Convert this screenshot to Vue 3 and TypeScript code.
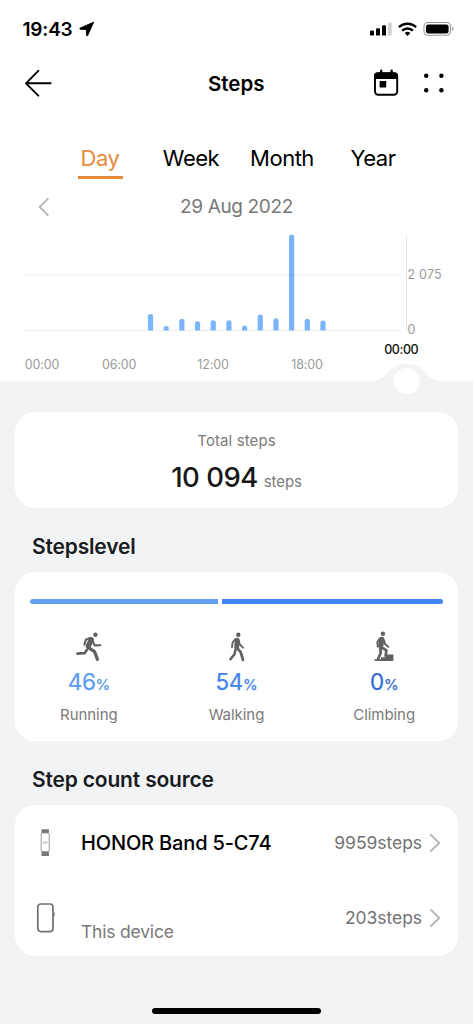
<template>
  <div class="screen">
    <section class="top">
      <div class="status-bar">
        <span class="clock">19:43</span>
        <svg class="location" width="16" height="16" viewBox="0 0 16 16">
          <path d="M14.6 1.2 1.2 7.1c-.7.4-.5 1.1.3 1.2l5.8.2.2 5.7c.1.8.8 1 1.2.3z" stroke="#000" stroke-width=".9" stroke-linejoin="round" />
        </svg>
        <svg class="indicators" width="86" height="16" viewBox="0 0 86 16">
          <rect x="0" y="9.6" width="4" height="5" rx="1.2" />
          <rect x="6" y="7.3" width="4" height="7.3" rx="1.2" />
          <rect x="12" y="4.3" width="4" height="10.3" rx="1.2" />
          <rect x="18" y="1.5" width="3.6" height="13.1" rx="1.2" fill="#cfcfcf" />
          <g fill="none" stroke="#000" stroke-width="2.5">
            <path d="M28.9 6.2a12.4 12.4 0 0 1 17.2 0" />
            <path d="M32.1 9.7a7.8 7.8 0 0 1 10.8 0" />
          </g>
          <path d="M34.6 12.1a4.2 4.2 0 0 1 5.8 0l-2.9 2.9z" />
          <rect x="54" y="1.5" width="26.6" height="12.8" rx="4" fill="none" stroke="#999" stroke-width="1.1" />
          <rect x="56" y="3.4" width="22.6" height="9" rx="2.2" />
          <path d="M82.3 5.8c1.7.6 1.7 3.8 0 4.4z" fill="#999" />
        </svg>
      </div>

      <header class="nav">
        <svg class="back" width="28" height="28" viewBox="0 0 28 28">
          <path d="M26.6 14.3H2.1M14.3 1.8 2 14.3l12.3 12.4" />
        </svg>
        <h1>Steps</h1>
        <svg class="calendar" width="26" height="28" viewBox="0 0 26 28">
          <rect x="2" y="4.2" width="22.2" height="21.6" rx="3.2" fill="none" stroke="#000" stroke-width="1.9" />
          <path d="M1 10V6.5a3 3 0 0 1 3-3h18a3 3 0 0 1 3 3V10z" />
          <path d="M8.2 1.8v3M18.6 1.8v3" stroke="#000" stroke-width="2.4" stroke-linecap="round" />
          <rect x="6.6" y="12" width="6.6" height="6.6" rx=".6" />
        </svg>
        <svg class="more" width="26" height="22" viewBox="0 0 26 22">
          <circle cx="5.2" cy="3.8" r="2.2" />
          <circle cx="20.4" cy="3.8" r="2.2" />
          <circle cx="5.2" cy="18.3" r="2.2" />
          <circle cx="20.4" cy="18.3" r="2.2" />
        </svg>
      </header>

      <nav class="tabs">
        <button
          v-for="tab in tabs"
          :key="tab"
          class="tab"
          :class="{ active: tab === activeTab }"
          @click="activeTab = tab"
        >
          {{ tab }}
        </button>
      </nav>

      <div class="date-row">
        <svg class="prev" width="12" height="20" viewBox="0 0 12 20">
          <path d="M10.3 1.4 1.6 10l8.7 8.6" />
        </svg>
        <span>29 Aug 2022</span>
      </div>

      <svg class="chart" width="473" height="173" viewBox="0 225 473 173">
        <path d="M24 274.8H401M24 330.5H401" stroke="#ececec" />
        <path d="M406.5 236V331" stroke="#e6e6e6" />
        <path v-for="bar in bars" :key="bar.x" :d="barPath(bar)" fill="#7ab5fb" />
        <path d="M289.2 274.8h5" stroke="#6fa9ee" />
        <g class="axis">
          <text x="407.5" y="278.6" textLength="34">2 075</text>
          <text x="407.5" y="333.6">0</text>
          <text v-for="label in timeLabels" :key="label.text" :x="label.x" y="369.3" text-anchor="middle">
            {{ label.text }}
          </text>
        </g>
        <text class="cursor-time" x="401.2" y="354" text-anchor="middle">00:00</text>
        <path d="M0 381.5H370C388 381.5 386 364 406.5 364S425 381.5 443 381.5H473V398H0z" fill="#f1f3f5" />
        <circle cx="406.5" cy="381" r="13" fill="#fff" />
      </svg>
    </section>

    <section class="card total">
      <p class="caption">Total steps</p>
      <p class="total-row"><strong>10 094</strong><span>steps</span></p>
    </section>

    <h2>Stepslevel</h2>
    <section class="card levels">
      <div class="split">
        <span
          v-for="level in levels.slice(0, 2)"
          :key="level.name"
          :style="{ flexGrow: level.percent, background: level.bar }"
        ></span>
      </div>
      <div class="level-list">
        <div v-for="level in levels" :key="level.name" class="level">
          <svg width="30" height="32" viewBox="0 0 30 32" class="figure">
            <g v-if="level.name === 'Running'">
              <circle cx="21.4" cy="4.7" r="2.2" class="solid" />
              <path d="M17.2 9.8 14.4 16" stroke-width="5.4" />
              <path d="M16 8 11.8 9.8 10.4 14.8M18.4 10.5 20.7 15.4 26.3 15.2" stroke-width="2.1" />
              <path d="M14.4 17.6 20.6 21.6 23.4 29.4" stroke-width="3.2" />
              <path d="M13 19.8 10.6 23.2 3.4 23.6" stroke-width="2.7" />
            </g>
            <g v-else-if="level.name === 'Walking'" transform="translate(.8 0)">
              <circle cx="16.5" cy="4.8" r="2.2" class="solid" />
              <path d="M15.4 10.2 14.9 17" stroke-width="4.9" />
              <path d="M13.6 9.2 10.8 12.3 10.2 17.2M17 10.4 18 14.4 21.2 17.6" stroke-width="1.9" />
              <path d="M15.2 17.8 18.9 22.2 21.2 30" stroke-width="2.7" />
              <path d="M13.7 19.4 12.6 24.4 8.6 29.2" stroke-width="2.5" />
            </g>
            <g v-else>
              <circle cx="13.9" cy="3.7" r="2.2" class="solid" />
              <path d="M12.8 9.4 11.8 15.6" stroke-width="5.2" />
              <path d="M11 8.4 8.4 12 8.8 16.6M15 10.2 16 14 19.3 16.8" stroke-width="2" />
              <path d="M12 17.2 17.4 20.5 16.6 26M11.2 18.3 11.8 22.8 9 29.3" stroke-width="2.7" />
              <path d="M5.5 29.2H12V27.2H17.3V24.4H24.4V31H5.5z" class="solid" />
            </g>
          </svg>
          <div class="percent" :style="{ color: level.color }">{{ level.percent }}<small>%</small></div>
          <div class="level-name">{{ level.name }}</div>
        </div>
      </div>
    </section>

    <h2 class="source-title">Step count source</h2>
    <section class="card sources">
      <div class="source">
        <svg class="device" width="20" height="32" viewBox="0 0 20 32">
          <path d="M6.5 2.3h7.4v5H6.5zM6.5 24h7.4v5H6.5z" fill="#777" />
          <rect x="6.2" y="6" width="8" height="18.6" rx=".8" fill="#fff" stroke="#999" />
          <path d="M8.6 14v3M8.6 15.5h2M10.4 14v3M12 14v3" stroke="#aaa" stroke-width=".6" />
        </svg>
        <span class="source-name">HONOR Band 5-C74</span>
        <span class="source-steps">9959steps</span>
        <svg class="next" width="12" height="20" viewBox="0 0 12 20">
          <path d="M1.4 1.4 10.2 10 1.4 18.6" />
        </svg>
      </div>
      <div class="source">
        <svg class="device" width="20" height="32" viewBox="0 0 20 32">
          <rect x="2.8" y="2" width="15.2" height="27.6" rx="3" fill="none" stroke="#6f6f6f" stroke-width="1.7" />
          <path d="M19 10.6v3.4" stroke="#6f6f6f" stroke-width="1.2" />
        </svg>
        <span class="source-name muted">This device</span>
        <span class="source-steps">203steps</span>
        <svg class="next" width="12" height="20" viewBox="0 0 12 20">
          <path d="M1.4 1.4 10.2 10 1.4 18.6" />
        </svg>
      </div>
    </section>

    <div class="home-indicator"></div>
  </div>
</template>

<script setup lang="ts">
import { ref } from "vue";

interface Bar {
  x: number;
  height: number;
}

const tabs = ["Day", "Week", "Month", "Year"];
const activeTab = ref("Day");

const heights = [16.5, 4.5, 11.8, 9.2, 10.2, 10.2, 5, 16, 12.3, 96, 11.8, 10];
const bars: Bar[] = heights.map((height, i) => ({ x: 150.5 + i * 15.68, height }));

// rounded at the top, flat on the baseline
const barPath = ({ x, height }: Bar) =>
  `M${x - 2.6} 330.5v${2.5 - height}q0 -2.5 2.6 -2.5t2.6 2.5V330.5z`;

const timeLabels = [
  { text: "00:00", x: 42 },
  { text: "06:00", x: 119.2 },
  { text: "12:00", x: 213 },
  { text: "18:00", x: 307 },
];

const levels = [
  { name: "Running", percent: 46, color: "#5b9cef", bar: "#659ff0" },
  { name: "Walking", percent: 54, color: "#4583ec", bar: "#4285f4" },
  { name: "Climbing", percent: 0, color: "#356bd0", bar: "#356bd0" },
];
</script>

<style>
body {
  margin: 0;
  background: #f1f3f5;
}
</style>

<style scoped>
.screen {
  width: 473px;
  height: 1024px;
  overflow: hidden;
  display: flex;
  flex-direction: column;
  background: #f1f3f5;
  color: #000;
  font-family: Inter, "Liberation Sans", sans-serif;
}

h1,
h2,
p {
  margin: 0;
}

svg {
  display: block;
  flex: none;
}

.top {
  background: #fff;
  height: 398px;
}

.status-bar {
  height: 58px;
  display: flex;
  align-items: center;
  padding: 0 17px 0 22.5px;
  box-sizing: border-box;
}

.clock {
  font-size: 19px;
  font-weight: 600;
  letter-spacing: -0.2px;
}

.location {
  margin-left: 6px;
}

.indicators {
  margin-left: auto;
}

.nav {
  height: 50px;
  display: grid;
  grid-template-columns: 100px 1fr 26px 26px;
  align-items: center;
  padding: 0 26px 0 24px;
  column-gap: 22px;
}

.back path {
  fill: none;
  stroke: #000;
  stroke-width: 1.9;
  stroke-linecap: round;
  stroke-linejoin: round;
}

h1 {
  font-size: 20.5px;
  font-weight: 600;
  padding: 1px 0 0 62px;
}

.tabs {
  display: grid;
  grid-template-columns: repeat(4, 91px);
  justify-content: center;
  margin-top: 32px;
  height: 39px;
}

.tab {
  display: flex;
  justify-content: center;
  justify-self: center;
  min-width: 45px;
  padding: 4px 0 0;
  border: 0;
  border-bottom: 3px solid transparent;
  background: none;
  font: 400 22px/28px Inter, sans-serif;
  letter-spacing: -0.5px;
  color: #000;
}

.tab.active {
  color: #e88a3e;
  border-color: #e88a3e;
}

.date-row {
  height: 46px;
  display: grid;
  grid-template-columns: 50px 1fr 50px;
  align-items: center;
  padding-top: 9px;
  box-sizing: border-box;
  text-align: center;
  font-size: 19px;
  letter-spacing: -0.35px;
  color: #777;
}

.prev {
  justify-self: end;
}

.prev path,
.next path {
  fill: none;
  stroke: #b5b5b5;
  stroke-width: 1.9;
}

.axis {
  font-size: 12.5px;
  letter-spacing: -0.15px;
  fill: #9b9b9b;
}

.cursor-time {
  font-size: 12.5px;
  font-weight: 500;
  letter-spacing: -0.4px;
  fill: #111;
}

.card {
  margin: 0 15px;
  border-radius: 20px;
  background: #fff;
  box-sizing: border-box;
  flex: none;
}

.total {
  margin-top: 14px;
  height: 96px;
  text-align: center;
}

.caption {
  padding-top: 19px;
  font-size: 15px;
  line-height: 20px;
  letter-spacing: 0.1px;
  color: #7a7a7a;
}

.total-row {
  line-height: 36px;
  margin-top: 8px;
}

.total-row strong {
  font-size: 27.5px;
  font-weight: 500;
  letter-spacing: -0.5px;
  color: #17181a;
}

.total-row span {
  margin-left: 6px;
  font-size: 15px;
  letter-spacing: -0.1px;
  color: #7a7a7a;
}

h2 {
  margin: 25px 32px 11px;
  font-size: 21px;
  line-height: 28px;
  font-weight: 600;
  letter-spacing: -0.18px;
  color: #1a1b1e;
}

.levels {
  height: 169px;
  padding: 27px 15px 0;
}

.split {
  display: flex;
  gap: 4px;
  height: 5px;
  border-radius: 3px;
  overflow: hidden;
}

.split span {
  flex-basis: 0;
}

.level-list {
  display: grid;
  grid-template-columns: repeat(3, 1fr);
  margin: 26px -15px 0;
}

.level {
  display: flex;
  flex-direction: column;
  align-items: center;
}

.figure path {
  fill: none;
  stroke: #616161;
  stroke-linecap: round;
  stroke-linejoin: round;
}

.figure .solid {
  fill: #616161;
  stroke: none;
}

.percent {
  margin-top: 5px;
  font-size: 22.5px;
  line-height: 30px;
  letter-spacing: -0.3px;
  -webkit-text-stroke: 0.25px currentColor;
}

.percent small {
  font-size: 15px;
}

.level-name {
  margin-top: 5px;
  font-size: 15px;
  line-height: 20px;
  letter-spacing: -0.05px;
  color: #7a7a7a;
}

.sources {
  height: 151px;
}

.source {
  height: 75.5px;
  display: flex;
  align-items: center;
  padding: 0 17px 0 20px;
}

.source-name {
  margin-left: 26px;
  font-size: 20px;
  font-weight: 500;
  letter-spacing: -0.15px;
}

.source-name.muted {
  font-size: 17.5px;
  font-weight: 400;
  letter-spacing: -0.2px;
  color: #7a7a7a;
  padding-top: 26px;
}

.source-steps {
  margin: -1px 7px 0 auto;
  font-size: 17.5px;
  letter-spacing: -0.05px;
  color: #737373;
}

.home-indicator {
  width: 169px;
  height: 6px;
  margin: 52px auto 0;
  border-radius: 3px;
  background: #000;
}
</style>
